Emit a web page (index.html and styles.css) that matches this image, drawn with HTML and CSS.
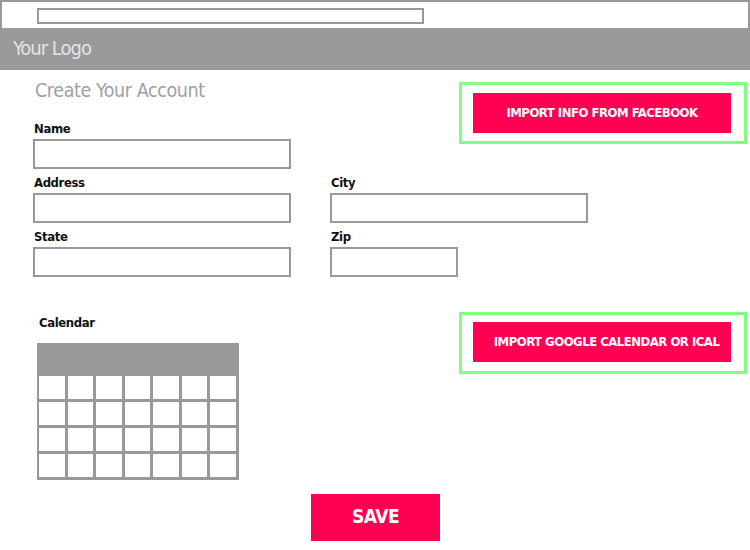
FILE: index.html
```html
<!DOCTYPE html>
<html lang="en">
<head>
<meta charset="utf-8">
<title>Create Your Account</title>
<link rel="stylesheet" href="styles.css">
</head>
<body>
<div class="topbar"><div class="search"></div></div>
<header class="header"><span class="logo">Your Logo</span></header>
<main class="main">
  <section class="top">
    <div class="intro">
      <h1 class="title">Create Your Account</h1>
      <div class="field">
        <label class="label">Name</label>
        <div class="input"></div>
      </div>
    </div>
    <div class="import-box">
      <button class="btn import">IMPORT INFO FROM FACEBOOK</button>
    </div>
  </section>
  <section class="fields">
    <div class="field"><label class="label">Address</label><div class="input"></div></div>
    <div class="field"><label class="label">City</label><div class="input"></div></div>
    <div class="field"><label class="label">State</label><div class="input"></div></div>
    <div class="field"><label class="label">Zip</label><div class="input short"></div></div>
  </section>
  <section class="bottom">
    <div class="cal-section">
      <div class="label cal-label">Calendar</div>
      <div class="calendar">
        <div class="cal-head"></div>
        <div class="cal-grid">
          <span></span><span></span><span></span><span></span><span></span><span></span><span></span>
          <span></span><span></span><span></span><span></span><span></span><span></span><span></span>
          <span></span><span></span><span></span><span></span><span></span><span></span><span></span>
          <span></span><span></span><span></span><span></span><span></span><span></span><span></span>
        </div>
      </div>
    </div>
    <div class="import-box gcal-box">
      <button class="btn import gcal">IMPORT GOOGLE CALENDAR OR ICAL</button>
    </div>
  </section>
</main>
<div class="save-row"><button class="btn save">SAVE</button></div>
</body>
</html>
```

FILE: styles.css
```css
* { box-sizing: border-box; }

body {
  margin: 0;
  width: 750px;
  background: #fff;
  font-family: "DejaVu Sans Condensed", "Open Sans", sans-serif;
  font-stretch: condensed;
  color: #111;
}

.topbar {
  height: 28px;
  border: 2px solid #999;
  border-bottom: none;
  padding: 6px 0 0 35px;
}

.search {
  width: 387px;
  height: 16px;
  border: 2px solid #999;
}

.header {
  height: 42px;
  background: #999;
  display: flex;
  align-items: center;
  padding: 0 0 3px 13px;
}

.logo {
  font-size: 20px;
  line-height: 24px;
  letter-spacing: -1px;
  color: #e3e3ea;
}

.main {
  padding: 0 3px 0 33px;
}

.top {
  display: flex;
  justify-content: space-between;
  align-items: flex-start;
}

.title {
  margin: 9px 0 0 2px;
  font-size: 19.5px;
  line-height: 24px;
  font-weight: 400;
  letter-spacing: -0.4px;
  color: #a0a0a0;
}

.intro .field { margin-top: 17px; }

.label {
  display: block;
  font-size: 13px;
  line-height: 16px;
  font-weight: 700;
  letter-spacing: -0.4px;
  padding-top: 1px;
  margin: 0 0 2px 1px;
}

.input {
  width: 258px;
  height: 30px;
  border: 2px solid #999;
}

.input.short { width: 128px; }

.fields {
  display: grid;
  grid-template-columns: 258px 258px;
  column-gap: 39px;
  row-gap: 5px;
  margin-top: 5px;
}

.import-box {
  width: 288px;
  height: 62px;
  margin-top: 12px;
  border: 3px solid #80ff80;
  padding: 8px 0 8px 11px;
}

.btn {
  border: none;
  background: #ff0052;
  color: #fff;
  font-family: inherit;
  font-stretch: condensed;
  font-weight: 700;
  white-space: nowrap;
  cursor: pointer;
}

.import {
  width: 258px;
  height: 40px;
  font-size: 13px;
  letter-spacing: -0.5px;
  padding: 0 0 2px;
}

.import.gcal { padding-left: 9px; }

.bottom {
  display: flex;
  justify-content: space-between;
  align-items: flex-start;
  margin-top: 35px;
}

.gcal-box { margin-top: 0; padding-top: 7px; }

.cal-section { padding: 2px 0 0 4px; }

.cal-label { margin: 0 0 12px 2px; }

.calendar {
  width: 202px;
  background: #999;
  padding: 0 3px 3px 2px;
}

.cal-head { height: 33px; }

.cal-grid {
  display: grid;
  grid-template-columns: repeat(7, 1fr);
  grid-auto-rows: 23px;
  gap: 3px;
}

.cal-grid span { background: #fff; }

.save-row {
  display: flex;
  justify-content: center;
  padding-top: 14px;
}

.save {
  width: 129px;
  height: 47px;
  font-size: 19px;
  letter-spacing: -0.5px;
  margin-left: 1px;
  padding: 0 0 3px;
}
```
